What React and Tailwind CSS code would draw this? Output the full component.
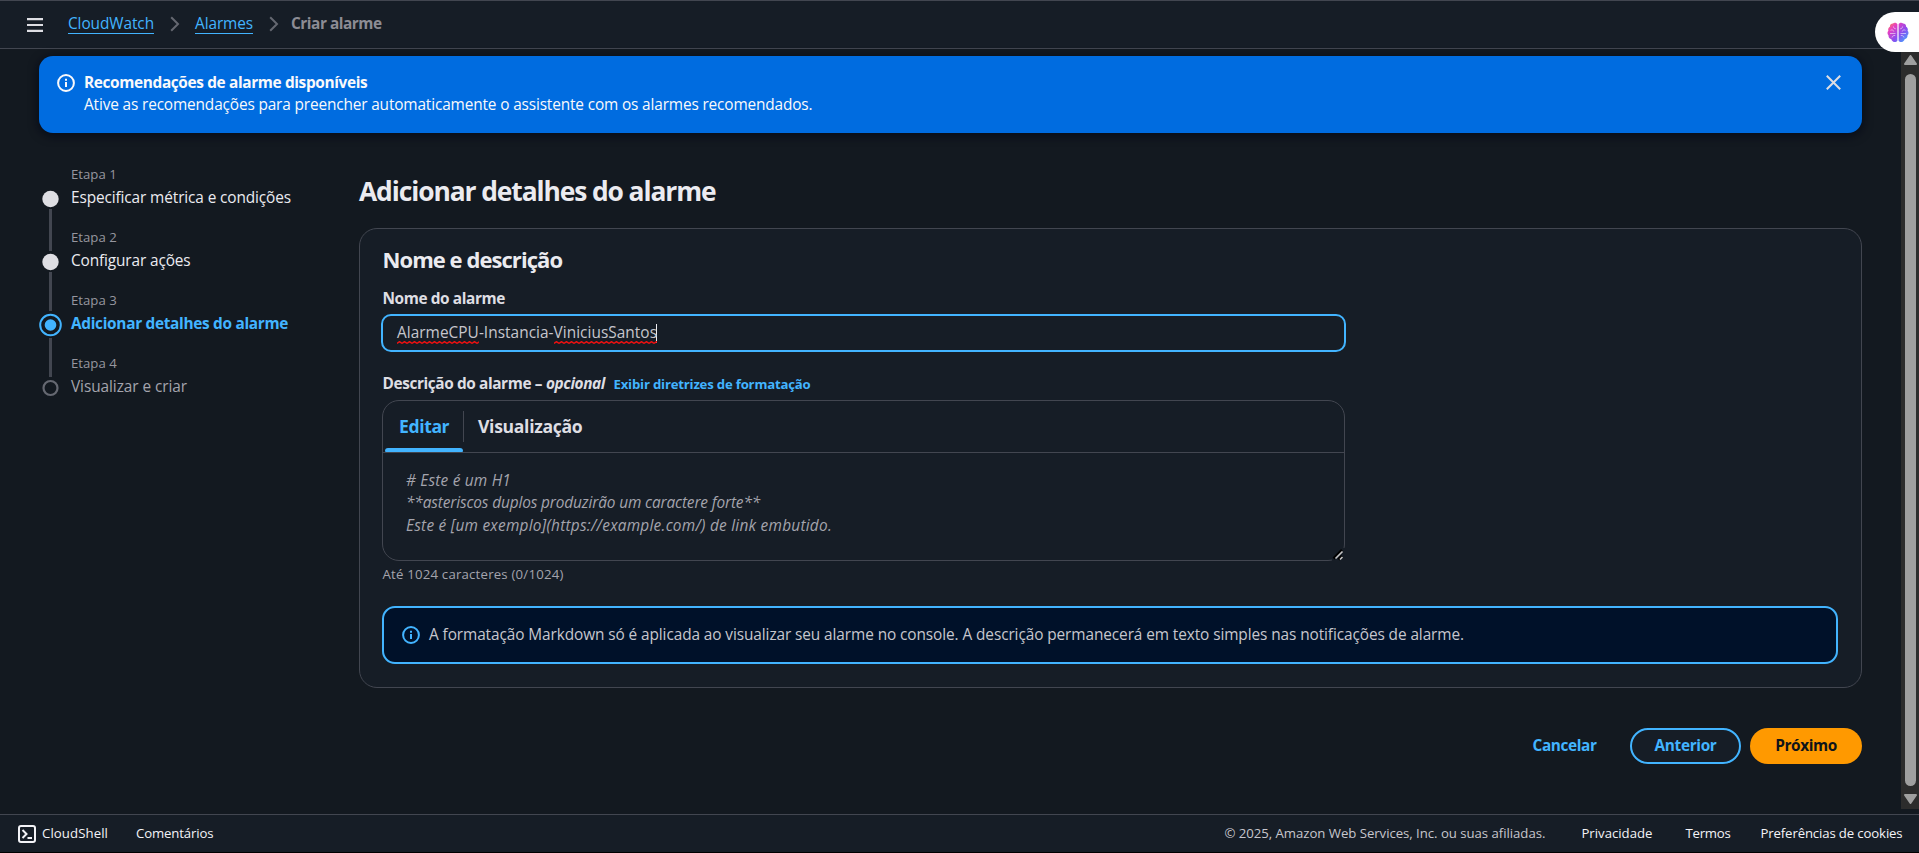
import React from 'react';

function Chevron() {
  return (
    <svg className="h-4 w-[10px] shrink-0" viewBox="0 0 10 16" fill="none" stroke="#656871" strokeWidth="2">
      <path d="M1.2 1.2 8 8l-6.8 6.8" />
    </svg>
  );
}

function InfoIcon({ className }) {
  return (
    <svg className={className} viewBox="0 0 18 18" fill="none" stroke="currentColor" strokeWidth="2">
      <circle cx="9" cy="9" r="7.9" />
      <path d="M9 8v5M9 4.8v2" />
    </svg>
  );
}

function BrainIcon() {
  return (
    <svg className="h-[21px] w-[22px]" viewBox="0 0 22 21">
      <defs>
        <linearGradient id="brain" x1="0" y1="0" x2="1" y2="1">
          <stop offset="0" stopColor="#ff9a3c" />
          <stop offset="0.25" stopColor="#e83fc0" />
          <stop offset="0.6" stopColor="#8a4df0" />
          <stop offset="1" stopColor="#35b8ff" />
        </linearGradient>
      </defs>
      <path
        fill="url(#brain)"
        d="M10.4 2.2C9.6.3 6.9.2 5.9 1.6 4 1.6 2.8 3 2.9 4.8 1.3 5.6.8 7.4 1.4 8.8.1 10 .2 12.2 1.5 13.2 1.3 15.3 2.5 16.8 4.2 17 4.9 20 8.9 21.3 10.4 18.8ZM11.6 2.2C12.4.3 15.1.2 16.1 1.6 18 1.6 19.2 3 19.1 4.8 20.7 5.6 21.2 7.4 20.6 8.8 21.9 10 21.8 12.2 20.5 13.2 20.7 15.3 19.5 16.8 17.8 17 17.1 20 13.1 21.3 11.6 18.8Z"
      />
      <g fill="none" stroke="#fff" strokeOpacity="0.6" strokeWidth="0.9">
        <path d="M6.5 4.5c0 1.5 1 2.3 2.3 2.3M3.5 8.3c1.5-.8 3-.2 3.3 1.2M3 11.5h5.5M5 15.5c.3-1.5 1.5-2.2 3.2-2M15.5 4.5c0 1.5-1 2.3-2.3 2.3M18.5 8.3c-1.5-.8-3-.2-3.3 1.2M19 11.5h-5.5M17 15.5c-.3-1.5-1.5-2.2-3.2-2" />
      </g>
    </svg>
  );
}

function Header() {
  return (
    <header className="flex h-[49px] shrink-0 items-center border-y border-[#424650] bg-[#161d26] pl-[27px]">
      <svg className="mr-[25px] h-[14px] w-4" viewBox="0 0 16 14" fill="#dedee3">
        <path d="M0 0h16v2.2H0zM0 5.9h16v2.2H0zM0 11.8h16v2.200H0z" />
      </svg>
      <nav className="flex items-center pb-[2px]">
        <a className="border-b border-[#42b4ff] leading-[19px] tracking-[-0.075px] text-[#42b4ff]">CloudWatch</a>
        <span className="flex pr-[15px] pl-4"><Chevron /></span>
        <a className="border-b border-[#42b4ff] leading-[19px] tracking-[-0.098px] text-[#42b4ff]">Alarmes</a>
        <span className="flex pr-3 pl-4"><Chevron /></span>
        <span className="font-bold tracking-[-0.48px] text-[#8c8c94]">Criar alarme</span>
      </nav>
    </header>
  );
}

function Banner() {
  return (
    <div className="flex h-[77px] shrink-0 rounded-[14px] bg-[#006ce0] pt-[15px] pl-[18px] text-[#f9f9fb] shadow-[0_2px_8px_2px_rgba(0,7,22,0.6)]">
      <InfoIcon className="mt-[3px] mr-[9px] h-[18px] w-[18px]" />
      <div className="flex-1 pt-px">
        <p className="font-bold tracking-[-0.36px]">Recomendações de alarme disponíveis</p>
        <p className="tracking-[-0.146px]">
          Ative as recomendações para preencher automaticamente o assistente com os alarmes recomendados.
        </p>
      </div>
      <svg className="mt-[4px] mr-[21px] h-[15px] w-[15px]" viewBox="0 0 15 15" stroke="#dedee3" strokeWidth="2">
        <path d="M.8.8l13.4 13.4M14.2.8.8 14.2" />
      </svg>
    </div>
  );
}

const steps = [
  { label: 'Etapa 1', title: 'Especificar métrica e condições', state: 'done', style: 'tracking-[-0.115px] text-[#ebebf0]' },
  { label: 'Etapa 2', title: 'Configurar ações', state: 'done', style: 'tracking-[-0.127px] text-[#ebebf0]' },
  { label: 'Etapa 3', title: 'Adicionar detalhes do alarme', state: 'active', style: 'font-bold tracking-[-0.31px] text-[#42b4ff]' },
  { label: 'Etapa 4', title: 'Visualizar e criar', state: 'todo', style: 'tracking-[-0.069px] text-[#a4a4ad]' },
];

function Rail({ state, first, last }) {
  const gap = state === 'active' ? 14 : 11;
  return (
    <svg className="h-[63px] w-[23px] shrink-0" viewBox="0 0 23 63">
      {!first && <rect x="10" y="0" width="3" height={36 - gap} fill="#424650" />}
      {!last && <rect x="10" y={36 + gap - 1} width="3" height={28 - gap} fill="#424650" />}
      {state === 'done' && <circle cx="11.5" cy="36" r="8.2" fill="#dedee3" />}
      {state === 'active' && (
        <>
          <circle cx="11.5" cy="36" r="10.3" fill="none" stroke="#42b4ff" strokeWidth="2" />
          <circle cx="11.5" cy="36" r="5.8" fill="#42b4ff" />
        </>
      )}
      {state === 'todo' && <circle cx="11.5" cy="36" r="7" fill="none" stroke="#656871" strokeWidth="2.2" />}
    </svg>
  );
}

function Steps() {
  return (
    <ol className="w-[320px] shrink-0">
      {steps.map((s, i) => (
        <li key={s.label} className="flex h-[63px] gap-[9px]">
          <Rail state={s.state} first={i === 0} last={i === steps.length - 1} />
          <div>
            <p className="text-[13.2px] text-[#96969f]">{s.label}</p>
            <p className={'mt-[2px] ' + s.style}>{s.title}</p>
          </div>
        </li>
      ))}
    </ol>
  );
}

function Misspelled({ children, id }) {
  return (
    <span className="relative">
      {children}
      <svg className="absolute bottom-[-1px] left-0 h-[3px] w-full">
        <defs>
          <pattern id={id} width="5" height="3" patternUnits="userSpaceOnUse">
            <path d="M0 2.4 2.5.6 5 2.4" fill="none" stroke="#f01010" strokeWidth="1.3" />
          </pattern>
        </defs>
        <rect width="100%" height="3" fill={'url(#' + id + ')'} />
      </svg>
    </span>
  );
}

function NameField() {
  return (
    <div className="-ml-[1.5px] flex h-[38px] w-[965px] items-center rounded-[10px] border-2 border-[#42b4ff] pl-[14px] text-[#c6c6cd]">
      <span className="tracking-[0.038px]">
        <Misspelled id="wave-a">AlarmeCPU</Misspelled>-Instancia-<Misspelled id="wave-b">ViniciusSantos</Misspelled>
      </span>
      <span className="-ml-px h-[19px] w-px bg-[#ebebf0]" />
    </div>
  );
}

function Editor() {
  return (
    <div className="relative -ml-[0.5px] flex h-[161px] w-[963px] flex-col rounded-[17px] border border-[#424650]">
      <div className="flex h-[52px] shrink-0 border-b border-[#424650] pl-[2px] text-[17.6px] font-bold">
        <div className="flex w-[78px] flex-col justify-between">
          <span className="pt-[14px] pl-[14px] tracking-[-0.4px] text-[#42b4ff]">Editar</span>
          <span className="h-1 rounded-t-[3px] rounded-b-[1px] bg-[#42b4ff]" />
        </div>
        <span className="mt-[10px] h-[31px] w-px bg-[#424650]" />
        <span className="pt-[14px] pl-[14px] tracking-[-0.33px] text-[#dedee3]">Visualização</span>
      </div>
      <div className="pt-[17px] pl-[23px] leading-[22.3px] text-[#a4a4ad] italic">
        <p className="tracking-[0.207px]"># Este é um H1</p>
        <p className="tracking-[-0.129px]">**asteriscos duplos produzirão um caractere forte**</p>
        <p className="tracking-[0.244px]">Este é [um exemplo](https://example.com/) de link embutido.</p>
      </div>
      <svg className="absolute right-[-1px] bottom-[-1px] h-[13px] w-[13px] bg-[#161d26]" viewBox="0 0 13 13">
        <path d="M1.5 10.5 10 2M6.5 11.5 10 8" stroke="#000" strokeWidth="2.5" />
        <path d="M3.5 10.5 10.5 3.5M8 11.5 10.5 9" stroke="#c6c6c6" strokeWidth="1.6" />
      </svg>
    </div>
  );
}

function DetailsCard() {
  return (
    <section className="h-[460px] rounded-[18px] border border-[#424650] bg-[#161d26] pt-[17px] pr-[23px] pl-[22.5px]">
      <h2 className="text-[22px] leading-[26px] font-bold tracking-[-0.94px] text-[#ebebf0]">Nome e descrição</h2>
      <p className="mt-[16px] mb-[4px] font-bold tracking-[-0.4px] text-[#dedee3]">Nome do alarme</p>
      <NameField />
      <div className="mt-[21px] mb-[5px] flex items-baseline font-bold">
        <span className="tracking-[-0.401px] text-[#dedee3]">Descrição do alarme –</span>
        <i className="ml-1 tracking-[-0.397px] text-[#dedee3]">opcional</i>
        <a className="ml-[8.5px] text-[13.2px] tracking-[-0.202px] text-[#42b4ff]">Exibir diretrizes de formatação</a>
      </div>
      <Editor />
      <p className="mt-[4px] text-[13.2px] leading-[18px] tracking-[0.212px] text-[#a4a4ad]">Até 1024 caracteres (0/1024)</p>
      <div className="mt-[23px] -ml-[0.5px] flex h-[58px] items-center gap-[9px] rounded-[13px] border-2 border-[#42b4ff] bg-[#001129] pb-px pl-[18px]">
        <InfoIcon className="h-[18px] w-[18px] text-[#42b4ff]" />
        <p className="tracking-[-0.092px] text-[#c6c6cd]">
          A formatação Markdown só é aplicada ao visualizar seu alarme no console. A descrição permanecerá em texto simples nas notificações de alarme.
        </p>
      </div>
    </section>
  );
}

function Actions() {
  return (
    <div className="mt-[40px] flex h-9 items-center justify-end font-bold">
      <button className="mr-[33.5px] tracking-[-0.401px] text-[#42b4ff]">Cancelar</button>
      <button className="mr-[9px] h-9 w-[111px] rounded-full border-2 border-[#42b4ff] bg-[#161d26] tracking-[-0.339px] text-[#42b4ff]">Anterior</button>
      <button className="h-9 w-[112px] rounded-full bg-[#ff9900] tracking-[-0.417px] text-[#0f141a]">Próximo</button>
    </div>
  );
}

function Scrollbar() {
  return (
    <div className="flex h-[760px] w-[18px] shrink-0 flex-col items-center bg-[#2c2c2c] pt-[6px] pl-px">
      <svg className="h-[10px] w-[13px]" viewBox="0 0 13 10" fill="#9f9f9f" stroke="#9f9f9f" strokeWidth="2" strokeLinejoin="round">
        <path d="M6.5 1 12 9H1z" />
      </svg>
      <span className="mt-[9px] h-[712px] w-[11px] rounded-full bg-[#9f9f9f]" />
      <svg className="mt-[8px] h-[10px] w-[13px]" viewBox="0 0 13 10" fill="#9f9f9f" stroke="#9f9f9f" strokeWidth="2" strokeLinejoin="round">
        <path d="M6.5 9 12 1H1z" />
      </svg>
    </div>
  );
}

function Footer() {
  return (
    <footer className="flex h-[39px] shrink-0 items-start border-t border-b border-t-[#424650] border-b-black bg-[#161d26] pt-[7px] pr-[16.5px] pl-[18px] text-[13.2px] text-[#f3f3f7]">
      <svg className="mt-[3px] mr-[6px] h-[18px] w-[18px]" viewBox="0 0 18 18" fill="none" stroke="#f3f3f7" strokeWidth="2">
        <rect x="1" y="1" width="16" height="16" rx="2" />
        <path d="M4.5 5 8.5 9l-4 4M9.5 13H14" />
      </svg>
      <span className="mr-[28px] tracking-[0.089px]">CloudShell</span>
      <span className="tracking-[-0.128px]">Comentários</span>
      <span className="mr-9 ml-auto tracking-[-0.035px] text-[#c6c6cd]">© 2025, Amazon Web Services, Inc. ou suas afiliadas.</span>
      <span className="mr-[33px]">Privacidade</span>
      <span className="mr-[30px] tracking-[-0.247px]">Termos</span>
      <span className="tracking-[-0.138px]">Preferências de cookies</span>
    </footer>
  );
}

export default function App() {
  return (
    <div className="relative flex h-[853px] w-full flex-col overflow-hidden bg-[#131920] font-['Open_Sans','Noto_Sans',sans-serif] text-[15.4px] leading-[22px] whitespace-nowrap">
      <Header />
      <div className="flex h-[765px] shrink-0">
        <main className="flex flex-1 flex-col pt-[7px] pr-[39px] pl-[39px]">
          <Banner />
          <div className="flex pt-[30px]">
            <Steps />
            <div className="flex-1">
              <h1 className="pt-[12px] pb-[20px] text-[26.4px] leading-[33px] font-bold tracking-[-1.09px] text-[#ebebf0]">Adicionar detalhes do alarme</h1>
              <DetailsCard />
              <Actions />
            </div>
          </div>
        </main>
        <Scrollbar />
      </div>
      <Footer />
      <div className="absolute top-3 right-0 flex h-10 w-11 items-center rounded-l-full bg-white pl-3">
        <BrainIcon />
      </div>
    </div>
  );
}
